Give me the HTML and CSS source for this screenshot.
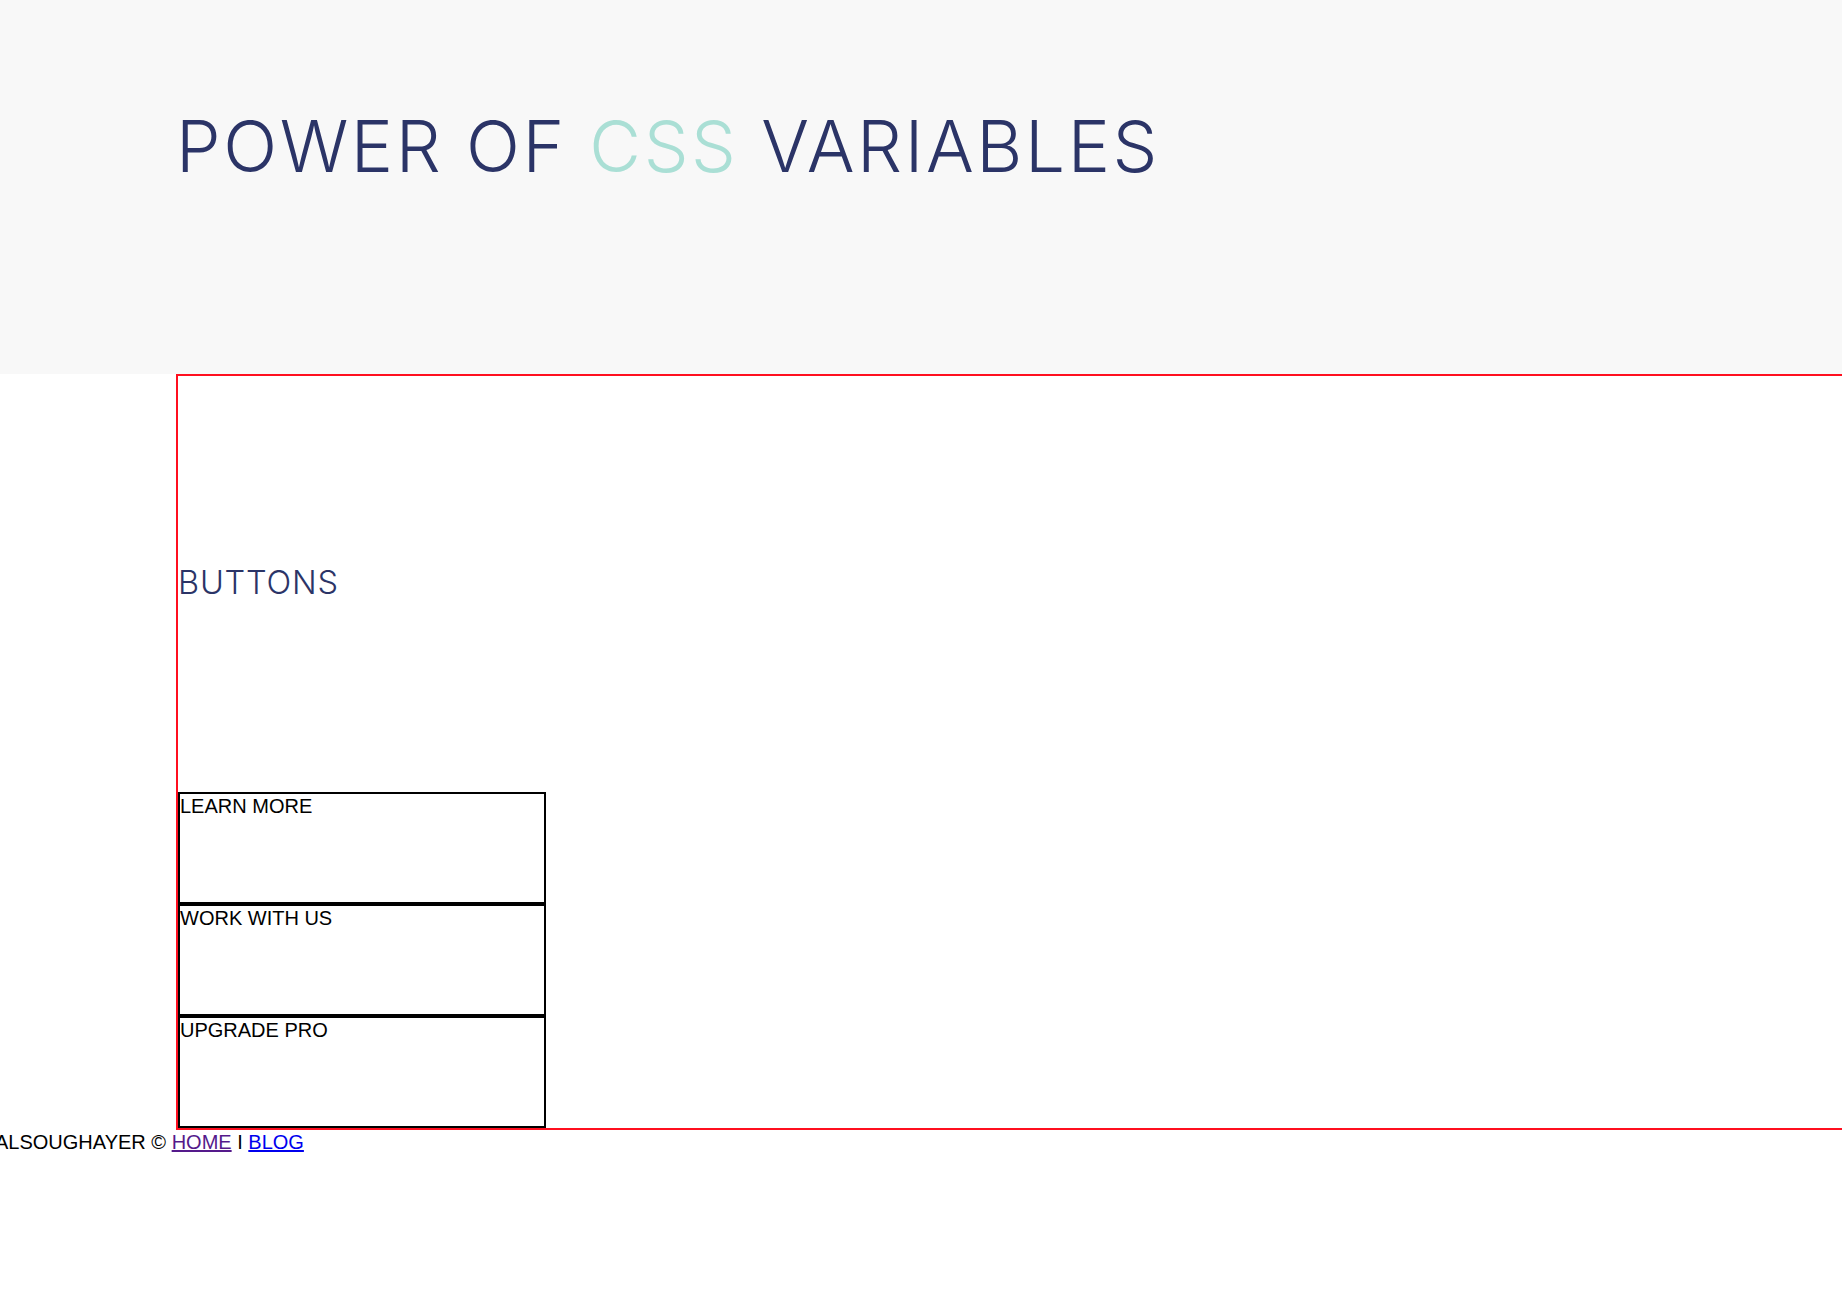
FILE: index.html
```html
<!DOCTYPE html>
<html lang="en">
<head>
<meta charset="utf-8">
<title>Power of CSS Variables</title>
<link rel="stylesheet" href="styles.css">
</head>
<body>
<header class="hero">
  <h1 class="hero-title">POWER OF <span class="accent">CSS</span> VARIABLES</h1>
</header>
<main class="panel">
  <h2 class="panel-title">BUTTONS</h2>
  <div class="btn-list">
    <button class="btn" type="button">LEARN MORE</button>
    <button class="btn" type="button">WORK WITH US</button>
    <button class="btn" type="button">UPGRADE PRO</button>
  </div>
</main>
<footer class="footer">ALSOUGHAYER © <a class="link link-visited" href="#">HOME</a> I <a class="link" href="#">BLOG</a></footer>
</body>
</html>
```

FILE: styles.css
```css
html, body {
  margin: 0;
  padding: 0;
}
body {
  background: #ffffff;
  overflow-x: hidden;
  font-family: "Liberation Sans", Arial, sans-serif;
  color: #000;
}
.hero {
  background: #f8f8f8;
  padding: 110px 176px 192px;
}
.hero-title {
  margin: 0;
  font-family: Inter, Roboto, "Liberation Sans", sans-serif;
  font-weight: 300;
  font-size: 71px;
  line-height: 72px;
  letter-spacing: 2.6px;
  color: #2b3467;
  white-space: nowrap;
}
.accent {
  color: #aadfd5;
}
.panel {
  display: block;
  margin-left: 176px;
  width: 100%;
  border: 2px solid #ff0f1f;
}
.panel-title {
  margin: 190px 0 193px;
  font-family: Inter, Roboto, "Liberation Sans", sans-serif;
  font-weight: 300;
  font-size: 32.5px;
  line-height: 33px;
  letter-spacing: 0.8px;
  color: #2b3467;
}
.btn-list {
  display: flex;
  flex-direction: column;
  align-items: flex-start;
}
.btn {
  display: flex;
  align-items: flex-start;
  box-sizing: border-box;
  width: 368px;
  height: 112px;
  margin: 0;
  padding: 1px 0 0;
  border: 2px solid #000;
  border-radius: 0;
  background: #fff;
  font-family: "Liberation Sans", Arial, sans-serif;
  font-size: 20px;
  line-height: 23px;
  color: #000;
  text-align: left;
}
.footer {
  margin-left: -5px;
  padding-top: 1px;
  font-size: 20px;
  line-height: 23px;
  white-space: nowrap;
}
.link {
  color: #0000ee;
  text-decoration: underline;
}
.link-visited {
  color: #551a8b;
}
```
